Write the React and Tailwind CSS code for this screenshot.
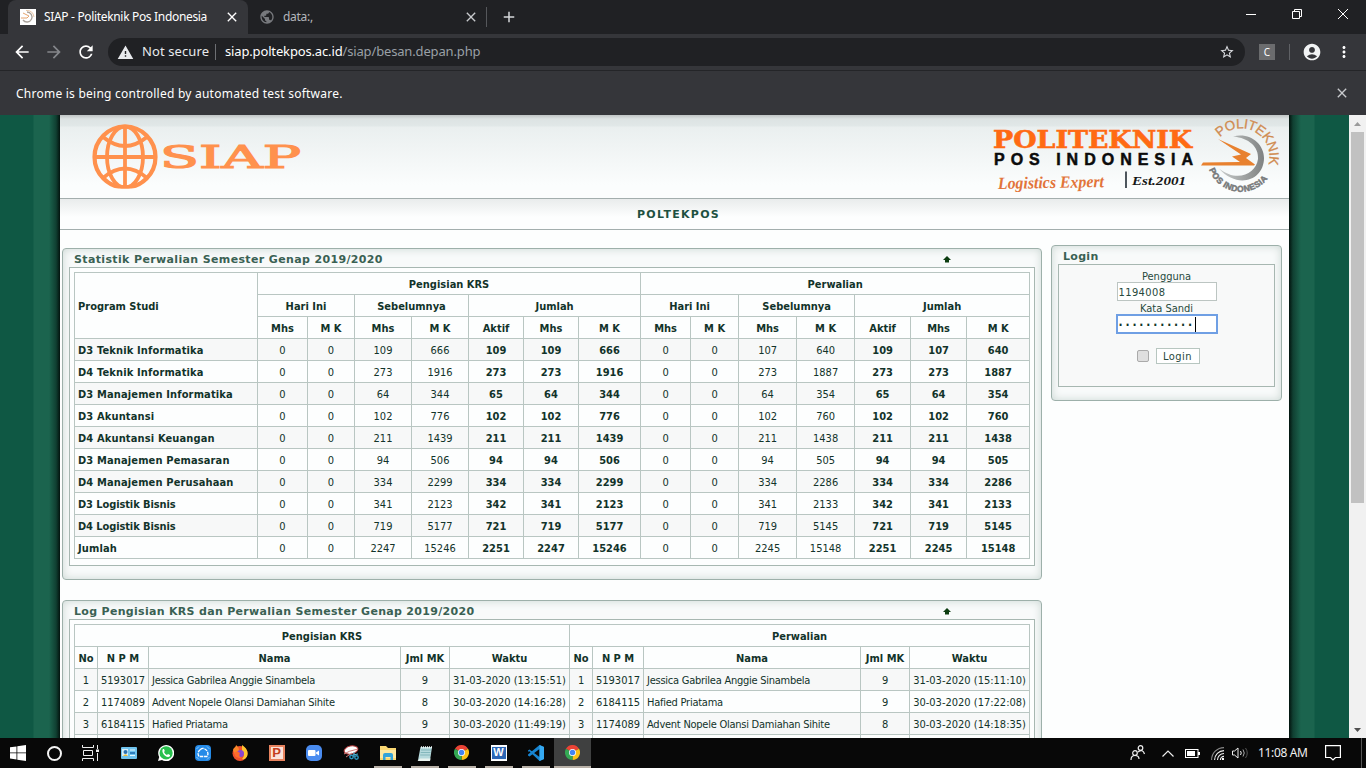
import React from "react";
import { MdAccountCircle, MdPublic, MdStarBorder, MdWarning, MdArrowBack, MdArrowForward, MdRefresh, MdClose, MdAdd, MdMoreVert } from "react-icons/md";

const ui = "font-['Noto_Sans','Open_Sans',sans-serif]";
const tahoma = "font-['DejaVu_Sans_Condensed','DejaVu_Sans',sans-serif] [font-stretch:condensed]";
const verdana = "font-['DejaVu_Sans',sans-serif]";

const stats = [
  ["D3 Teknik Informatika", "0 0 109 666 109 109 666 0 0 107 640 109 107 640"],
  ["D4 Teknik Informatika", "0 0 273 1916 273 273 1916 0 0 273 1887 273 273 1887"],
  ["D3 Manajemen Informatika", "0 0 64 344 65 64 344 0 0 64 354 65 64 354"],
  ["D3 Akuntansi", "0 0 102 776 102 102 776 0 0 102 760 102 102 760"],
  ["D4 Akuntansi Keuangan", "0 0 211 1439 211 211 1439 0 0 211 1438 211 211 1438"],
  ["D3 Manajemen Pemasaran", "0 0 94 506 94 94 506 0 0 94 505 94 94 505"],
  ["D4 Manajemen Perusahaan", "0 0 334 2299 334 334 2299 0 0 334 2286 334 334 2286"],
  ["D3 Logistik Bisnis", "0 0 341 2123 342 341 2123 0 0 341 2133 342 341 2133"],
  ["D4 Logistik Bisnis", "0 0 719 5177 721 719 5177 0 0 719 5145 721 719 5145"],
  ["Jumlah", "0 0 2247 15246 2251 2247 15246 0 0 2245 15148 2251 2245 15148"],
];
const statCols = [183, 50, 47, 57, 57, 55, 55, 62, 50, 48, 58, 58, 56, 56, 63];

const logs = [
  ["1", "5193017", "Jessica Gabrilea Anggie Sinambela", "9", "31-03-2020 (13:15:51)", "1", "5193017", "Jessica Gabrilea Anggie Sinambela", "9", "31-03-2020 (15:11:10)"],
  ["2", "1174089", "Advent Nopele Olansi Damiahan Sihite", "8", "30-03-2020 (14:16:28)", "2", "6184115", "Hafied Priatama", "9", "30-03-2020 (17:22:08)"],
  ["3", "6184115", "Hafied Priatama", "9", "30-03-2020 (11:49:19)", "3", "1174089", "Advent Nopele Olansi Damiahan Sihite", "8", "30-03-2020 (14:18:35)"],
  ["", "", "", "", "", "", "", "", "", ""],
];
const logCols = [23, 51, 252, 49, 120, 23, 51, 217, 49, 120];

const cell = "h-[22px] border-r border-b border-[#b9c6c2] px-0 pt-[2px] pb-0 leading-[19px] whitespace-nowrap overflow-hidden";

function Th({ children, className = "text-center", ...rest }) {
  return <th className={`${cell} bg-[#fdfefe] font-bold ${className}`} {...rest}>{children}</th>;
}

function Cols({ widths }) {
  return <colgroup>{widths.map((w, i) => <col key={i} style={{ width: w }} />)}</colgroup>;
}

const tableClass = `table-fixed border-separate border-spacing-0 w-[956px] border-l border-t border-[#b9c6c2] text-[11px] text-[#12332a] ${tahoma}`;

function StatsTable() {
  return (
    <table className={tableClass}>
      <Cols widths={statCols} />
      <tbody>
        <tr>
          <Th rowSpan={3} className="pl-[3px] text-left">Program Studi</Th>
          <Th colSpan={7}>Pengisian KRS</Th>
          <Th colSpan={7}>Perwalian</Th>
        </tr>
        <tr>
          {[0, 1].map((k) => (
            <React.Fragment key={k}>
              <Th colSpan={2}>Hari Ini</Th>
              <Th colSpan={2}>Sebelumnya</Th>
              <Th colSpan={3}>Jumlah</Th>
            </React.Fragment>
          ))}
        </tr>
        <tr>
          {["Mhs", "M K", "Mhs", "M K", "Aktif", "Mhs", "M K", "Mhs", "M K", "Mhs", "M K", "Aktif", "Mhs", "M K"].map((t, i) => <Th key={i}>{t}</Th>)}
        </tr>
        {stats.map(([name, vals], r) => (
          <tr key={name} className={r % 2 ? "bg-[#fdfefe]" : "bg-[#f7f8f8]"}>
            <td className={`${cell} pl-[3px] text-left font-bold ${name.includes("Logistik") ? "tracking-[-0.1px]" : "tracking-[0.14px]"}`}>{name}</td>
            {vals.split(" ").map((v, i) => (
              <td key={i} className={`${cell} text-center ${i % 7 > 3 ? "font-bold" : ""}`}>{v}</td>
            ))}
          </tr>
        ))}
      </tbody>
    </table>
  );
}

function LogTable() {
  return (
    <table className={tableClass}>
      <Cols widths={logCols} />
      <tbody>
        <tr>
          <Th colSpan={5}>Pengisian KRS</Th>
          <Th colSpan={5}>Perwalian</Th>
        </tr>
        <tr>
          {["No", "N P M", "Nama", "Jml MK", "Waktu", "No", "N P M", "Nama", "Jml MK", "Waktu"].map((t, i) => <Th key={i}>{t}</Th>)}
        </tr>
        {logs.map((row, r) => (
          <tr key={r} className={r % 2 ? "bg-[#fdfefe]" : "bg-[#f7f8f8]"}>
            {row.map((v, i) => (
              <td key={i} className={`${cell} ${i % 5 === 2 ? "pl-[3px] text-left tracking-[-0.25px]" : "text-center"}`}>{v}</td>
            ))}
          </tr>
        ))}
      </tbody>
    </table>
  );
}

function Panel({ title, className, titleClass, arrow, children }) {
  return (
    <section className={`rounded-[4px] border border-[#9db0aa] bg-[#f8fafa] px-[6px] shadow-[inset_0_0_8px_#cbd7d3] ${className}`}>
      <div className="flex h-[18px] items-center justify-between">
        <h2 className={`text-[11px] leading-[18px] font-bold whitespace-nowrap text-[#3a6153] ${verdana} ${titleClass}`}>{title}</h2>
        {arrow && (
          <svg className="mt-[3px] mr-[84px] h-[7px] w-[8px]" viewBox="0 0 8 7"><path d="M4 0 8 4H6V6.500H2V4H0Z" fill="#0c3d10" /></svg>
        )}
      </div>
      {children}
    </section>
  );
}

function Globe() {
  return (
    <svg className="h-[66px] w-[66px]" viewBox="0 0 66 66" fill="none" stroke="#ff914d" strokeWidth="3.8">
      <clipPath id="globeClip"><rect width="66" height="64.5" /></clipPath>
      <g clipPath="url(#globeClip)">
        <circle cx="33" cy="33" r="30.5" strokeWidth="4.2" />
        <ellipse cx="33" cy="33" rx="18" ry="30.5" />
        <path d="M33 2V64M2 33H64" />
        <path d="M11 13Q33 31 55 13M11 54Q33 35 55 54" />
      </g>
    </svg>
  );
}

function CampusLogo() {
  return (
    <svg className="h-[80px] w-[292px]" viewBox="990 117 292 80">
      <defs>
        <path id="arcTop" d="M1220 137.500A28.500 28.500 0 0 1 1266.500 169.500" />
        <path id="arcBottom" d="M1209 169.500A34 34 0 0 0 1269 177" />
        <linearGradient id="ring" x1="0" x2="1" y1="0" y2="0"><stop offset="0" stopColor="#c9cccb" /><stop offset="1" stopColor="#7f8282" /></linearGradient>
      </defs>
      <text x="993" y="147.500" textLength="199" lengthAdjust="spacingAndGlyphs" fontFamily="DejaVu Serif" fontWeight="700" fontSize="24" fill="#ff6a13" stroke="#ff6a13" strokeWidth=".6">POLITEKNIK</text>
      <text x="994" y="164.500" textLength="199" fontFamily="Liberation Sans" fontWeight="700" fontSize="16" fill="#0b0b0b" stroke="#0b0b0b" strokeWidth=".5">POS INDONESIA</text>
      <text x="998" y="188" textLength="106" lengthAdjust="spacingAndGlyphs" transform="rotate(-1 1050 188)" fontFamily="Liberation Serif" fontStyle="italic" fontWeight="700" fontSize="17" fill="#e2743a">Logistics Expert</text>
      <path d="M1126 171.500V188" stroke="#222c35" strokeWidth="1.600" />
      <text x="1132" y="184.500" textLength="54" lengthAdjust="spacingAndGlyphs" fontFamily="Liberation Serif" fontStyle="italic" fontWeight="700" fontSize="13.500" fill="#161616">Est.2001</text>
      <path d="M1233 136.500C1250 132 1264 144 1264 158C1264 180 1238 190 1219 168.500C1237 183 1256 174 1258 159C1259 147 1249 138 1233 136.500Z" fill="url(#ring)" />
      <path d="M1218 139 1251 154 1246 158 1255 164.500 1254 165.500H1201L1203 162.500 1240 162 1232 156.500 1241 154.500Z" fill="#e8812f" />
      <text fontFamily="Liberation Sans" fontSize="13.500" fill="#d08b50" stroke="#d08b50" strokeWidth=".3"><textPath href="#arcTop" textLength="76">POLITEKNIK</textPath></text>
      <text fontFamily="Liberation Sans" fontWeight="700" fontSize="8.500" fill="#77797a" stroke="#77797a" strokeWidth=".5"><textPath href="#arcBottom" textLength="72">POS INDONESIA</textPath></text>
    </svg>
  );
}

function ChromeIcon() {
  return (
    <svg className="h-[15px] w-[15px]" viewBox="0 0 24 24">
      <path d="M12 12 1.600 6A12 12 0 0 1 22.400 6Z" fill="#ea4335" />
      <path d="M12 12 22.400 6A12 12 0 0 1 12 24Z" fill="#fbc116" />
      <path d="M12 12V24A12 12 0 0 1 1.600 6Z" fill="#34a853" />
      <circle cx="12" cy="12" r="5.600" fill="#fff" /><circle cx="12" cy="12" r="4.400" fill="#4285f4" />
    </svg>
  );
}

function Task({ children, open, active }) {
  return (
    <div className={`flex h-[30px] w-[37px] flex-col items-center ${active ? "bg-[#3f4040]" : ""}`}>
      <div className="flex h-7 items-center pt-[1px]">{children}</div>
      {open && <div className={`h-[2px] bg-[#b9b1a8] ${active ? "w-full" : "w-7"}`} />}
    </div>
  );
}

function Taskbar() {
  return (
    <footer className="flex h-[30px] shrink-0 bg-[#080808]">
      <div className="flex h-[30px] w-9 items-center justify-center"><svg className="h-4 w-4" viewBox="0 0 16 16" fill="#fff"><path d="M0 2.300 6.500 1.400V7.500H0ZM7.300 1.300 16 0V7.500H7.300ZM0 8.300H6.500V14.500L0 13.600ZM7.300 8.300H16V16L7.300 14.700Z" /></svg></div>
      <div className="flex h-[30px] w-9 items-center justify-center"><div className="h-[15px] w-[15px] rounded-full border-2 border-[#f4f4f4]" /></div>
      <div className="mr-[2px] flex h-[30px] w-9 items-center justify-center"><svg className="h-4 w-[17px]" viewBox="0 0 17 16" fill="none" stroke="#eee"><path d="M.5 0V2.500H11.500V0M.5 16V13.500H11.500V16M1.500 5.500H10.500V10.500H1.500ZM15.500 0V4M15.500 8V16" /><path d="M14 4.500H17V7H14Z" fill="#eee" stroke="none" /></svg></div>
      <Task><svg className="h-3 w-4" viewBox="0 0 16 12"><rect width="16" height="12" rx="1" fill="#6fc3ee" /><rect x="1" y="2" width="6" height="7" fill="#d7effb" /><circle cx="4.500" cy="5" r="2" fill="#2b72b4" /><path d="M2 9Q4.500 5.500 7 9Z" fill="#e8bc3b" /><path d="M9 3H14M9 8.500H14" stroke="#e8f7ff" /><path d="M9 6H14" stroke="#1b67ae" strokeWidth="1.500" /></svg></Task>
      <Task><svg className="h-4 w-4" viewBox="0 0 16 16"><path d="M0 16 1.200 12A8 8 0 1 1 4 14.900Z" fill="#fff" /><circle cx="8.100" cy="7.900" r="6.600" fill="#28c04d" /><path d="M5 4C3.500 6 5 9 7 10.700C9 12.300 11 12.500 12 11V10L10 9 9 10C7.500 9.500 6.500 8 6 7L6.800 6 6 4Z" fill="#fff" /></svg></Task>
      <Task><svg className="h-4 w-4" viewBox="0 0 16 16"><rect width="16" height="16" rx="4" fill="#258be8" /><path d="M5.500 4.500A4.800 4.800 0 0 0 4 11.500H12A4.800 4.800 0 0 0 10.500 4.500A3.500 3.500 0 0 0 5.500 4.500Z" fill="none" stroke="#fff" strokeWidth="1.300" strokeDasharray="3.500 .8" /><path d="M1.500 4 4 1.500M12 1.500 14.500 4M1.500 12 4 14.500M14.500 12 12 14.500" stroke="#9cd2ff" strokeWidth=".8" /></svg></Task>
      <Task><svg className="h-4 w-4" viewBox="0 0 16 16"><circle cx="8" cy="8.500" r="7.500" fill="#f1512c" /><path d="M1 5C2 2 4 2 4 0C6 2 7 3 7 5L10 7 4 12Z" fill="#fc8729" /><path d="M10 0C15 3 16 7 15.500 10C15 13 12 15 10 14Q14 9 10 6Z" fill="#ffc42e" /><circle cx="8.500" cy="8.500" r="3.500" fill="#8b45d1" /><path d="M2 8Q5 5 8 8Q6 12 10 13Q4 14 2 8Z" fill="#ff6b2c" /></svg></Task>
      <Task><div className="flex h-4 w-4 items-center justify-center border-2 border-[#e8835f] bg-[#fbe3d9] font-['Liberation_Sans',sans-serif] text-[13px] leading-none font-bold text-[#c43e1c]">P</div></Task>
      <Task><div className="flex h-4 w-4 items-center justify-center rounded-[5px] bg-[#4a8cf0]"><svg className="h-2 w-3" viewBox="0 0 12 8" fill="#fff"><rect y="1" width="7.500" height="6" rx="1" /><path d="M8 3.500 11 1.500V6.500L8 4.500Z" /></svg></div></Task>
      <Task><svg className="h-4 w-4" viewBox="0 0 16 16"><ellipse cx="8" cy="5" rx="7" ry="4" fill="#fff" stroke="#b23838" transform="rotate(-12 8 5)" /><path d="M1 9Q5 6 15 4M3 12 9 8" stroke="#d07c7c" fill="none" /><circle cx="8.500" cy="12" r="1.700" fill="none" stroke="#2b95bf" strokeWidth="1.400" /><circle cx="13.500" cy="12.500" r="1.700" fill="none" stroke="#2b95bf" strokeWidth="1.400" /><path d="M10 10 15 9M11 7V12" stroke="#4fb5d6" /></svg></Task>
      <Task open><svg className="h-[14px] w-4" viewBox="0 0 16 14"><path d="M0 0H6L8 2H16V14H0Z" fill="#fbd873" /><path d="M0 4H16V12H0Z" fill="#ffe8a0" /><path d="M3 14V9Q3 7 5 7H11Q13 7 13 9V14H10.500V11H5.500V14Z" fill="#35a3d9" /></svg></Task>
      <Task open><svg className="h-4 w-4" viewBox="0 0 16 16"><path d="M3.500 2H15L13 15.500H1Z" fill="#b5d9dc" /><path d="M3 13.500H13.500L13 16H.5Z" fill="#e9f3ef" /><path d="M4 5H14M3.700 7.500H13.500M3.200 10H13" stroke="#6da7ae" strokeWidth=".7" /><path d="M4 2.200H15" stroke="#f1f5f4" strokeWidth="2" strokeDasharray="1 1" /></svg></Task>
      <Task open><ChromeIcon /></Task>
      <Task open><div className="flex h-4 w-4 items-center justify-center border border-white bg-[#f3f8ff] font-['Liberation_Sans',sans-serif]"><div className="flex h-3 w-3.5 items-center justify-center bg-[#2b66b5] text-[11px] leading-none font-bold text-white">W</div></div></Task>
      <Task open><svg className="h-4 w-4" viewBox="0 0 16 16"><path d="M11.500 0 16 2V14L11.500 16 1 6 0 7 0 5.500 1.500 4.500 11.500 12V4L1.500 11.500 0 10.500V9.500Z" fill="#1784d1" /><path d="M11.500 0 16 2V14L11.500 16Z" fill="#35a9f2" /></svg></Task>
      <Task open active><ChromeIcon /></Task>

      <div className="ml-auto flex h-[30px] w-[236px] items-center">
        <svg className="h-4 w-4" viewBox="0 0 16 16" fill="none" stroke="#eee" strokeWidth="1.200"><circle cx="10.500" cy="3" r="2.300" /><circle cx="5" cy="8" r="2.300" /><path d="M1 15Q1 10.500 5 10.500T9 14M8 7Q13 3.500 14.500 9" /></svg>
        <svg className="ml-[16px] h-[7px] w-[12px]" viewBox="0 0 12 7" fill="none" stroke="#eee" strokeWidth="1.200"><path d="M.5 6.500 6 1 11.500 6.500" /></svg>
        <svg className="ml-[11px] h-[9px] w-[15px]" viewBox="0 0 15 9"><rect x=".5" y=".5" width="12.500" height="8" fill="none" stroke="#fff" /><rect x="2" y="2" width="8" height="5" fill="#fff" /><rect x="13" y="3" width="2" height="3" fill="#fff" /></svg>
        <svg className="ml-[11px] h-[13px] w-[13px]" viewBox="0 0 13 13" fill="none" stroke="#eee" strokeWidth="1.100"><path d="M.6 13A12.400 12.400 0 0 1 13 .6" stroke="#888" /><path d="M3.600 13A9.400 9.400 0 0 1 13 3.600M6.500 13A6.500 6.500 0 0 1 13 6.500M9.400 13A3.600 3.600 0 0 1 13 9.400" /><circle cx="12" cy="12" r="1.200" fill="#fff" stroke="none" /></svg>
        <svg className="ml-[8px] h-3 w-[17px]" viewBox="0 0 17 12" fill="none" stroke="#eee"><path d="M.5 4V8H2.500L6 11V1L2.500 4Z" /><path d="M8.500 4Q10 6 8.500 8" /><path d="M11 2.500Q13.500 6 11 9.500" stroke="#aaa" /><path d="M13.500 1Q17 6 13.500 11" stroke="#555" /></svg>
        <span className={`ml-[9px] w-[60px] text-[12px] leading-[16px] whitespace-nowrap tracking-[-0.35px] text-[#f0f0f0] ${ui}`}>11:08 AM</span>
        <svg className="ml-[7px] h-4 w-4" viewBox="0 0 16 16" fill="none" stroke="#fff" strokeWidth="1.200"><path d="M.6.6H15.400V12.500H10.500L8 15 5.500 12.500H.6Z" /></svg>
        <div className="ml-[20px] h-[30px] w-px bg-[#555]" />
      </div>
    </footer>
  );
}

function BrowserChrome() {
  return (
    <header className={`shrink-0 text-[12px] text-white ${ui}`}>
      <div className="flex h-[34px] bg-[#202124] pl-2">
        <div className="flex h-[34px] w-[240px] items-center rounded-t-[8px] bg-[#35363a] pr-[8px] pl-3">
          <svg className="h-4 w-4 bg-white" viewBox="0 0 16 16" fill="none"><path d="M7 3A5 5 0 1 1 3 11" stroke="#a9a29b" strokeWidth="1.300" /><path d="M3 4 9 7 7 9H1" stroke="#e6a36c" /><path d="M6 1.500Q13 1 14 8" stroke="#e9c7a7" /></svg>
          <span className="ml-2 flex-1 tracking-[-0.33px] whitespace-nowrap">SIAP - Politeknik Pos Indonesia</span>
          <MdClose className="h-4 w-4" />
        </div>
        <div className="flex h-[34px] w-[238px] items-center pr-[7px] pl-[11px] text-[#b4b7bb]">
          <MdPublic className="h-4 w-4 text-[#77797d]" />
          <span className="ml-2 flex-1 tracking-[-0.3px]">data:,</span>
          <MdClose className="h-4 w-4 text-[#c8cacd]" />
        </div>
        <div className="mt-[7px] h-5 w-px bg-[#55575b]" />
        <MdAdd className="mt-[8px] ml-[13px] h-[18px] w-[18px] text-[#d5d7da]" />
        <div className="ml-auto flex items-start pt-[9px]">
          <svg className="h-[11px] w-[10px]" viewBox="0 0 10 11"><path d="M0 5.500H10" stroke="#fff" /></svg>
          <svg className="ml-[36px] h-[10px] w-[10px]" viewBox="0 0 10 10" fill="none" stroke="#fff"><path d="M.5 2.500H7.500V9.500H.5ZM2.500 2.500V.5H9.500V7.500H7.500" /></svg>
          <svg className="mr-[18px] ml-[36px] h-[10px] w-[10px]" viewBox="0 0 10 10" stroke="#fff"><path d="M0 0 10 10M10 0 0 10" /></svg>
        </div>
      </div>
      <div className="flex h-9 items-center bg-[#35363a]">
        <MdArrowBack className="ml-[12px] h-5 w-5" />
        <MdArrowForward className="ml-[12px] h-5 w-5 text-[#85878b]" />
        <MdRefresh className="ml-[12px] h-5 w-5" />
        <div className="ml-[12px] flex h-7 w-[1137px] items-center rounded-full bg-[#202124] pl-[9px] text-[13px]">
          <MdWarning className="h-[17px] w-[17px] text-[#e8eaed]" />
          <span className="ml-2 w-[66px] whitespace-nowrap tracking-[0.1px] text-[#e8eaed]">Not secure</span>
          <div className="ml-[7px] h-4 w-px bg-[#6d6f73]" />
          <span className="ml-[9px] flex-1 tracking-[-0.15px] whitespace-nowrap">siap.poltekpos.ac.id<span className="text-[#9aa0a6]">/siap/besan.depan.php</span></span>
          <MdStarBorder className="mr-[10px] h-4 w-4 text-[#dadce0]" />
        </div>
        <div className="ml-[14px] flex h-4 w-4 items-center justify-center bg-[#6b6c6e] text-[10px] leading-none">C</div>
        <div className="ml-[14px] h-4 w-px bg-[#5f6165]" />
        <MdAccountCircle className="ml-[12px] h-5 w-5 text-[#f1f3f4]" />
        <MdMoreVert className="ml-[13px] h-[18px] w-[18px]" />
      </div>
      <div className="flex h-[45px] items-center justify-between border-t border-[#242528] bg-[#35363a] pr-4 pl-4">
        <span className="pt-[2px] tracking-[0.24px] whitespace-nowrap">Chrome is being controlled by automated test software.</span>
        <MdClose className="h-4 w-4 text-[#c8cacd]" />
      </div>
    </header>
  );
}

export default function App() {
  return (
    <div className="flex h-[768px] w-[1366px] flex-col overflow-hidden bg-white">
      <BrowserChrome />
      <div className="flex h-[623px] shrink-0 overflow-hidden">
        <div className="h-full w-[60px] bg-[linear-gradient(90deg,#0f5844_0px,#0f5844_33px,#1b644e_34px,#1b644e_49px,#104032_56px,#03130e_60px)]" />
        <main className="h-full w-[1229px] bg-[#fdfefe]">
          <div className="flex h-[83px] items-start justify-between bg-[linear-gradient(180deg,#bfc4c4_0px,#dde3e3_4px,#e1e8e8_11px,#eaefef_12px,#fbfdfd_70px)]">
            <div className="flex pt-[9px] pl-[32px]">
              <Globe />
              <svg className="h-[66px] w-[146px]" viewBox="0 0 146 66"><text x="2" y="44" textLength="141" lengthAdjust="spacingAndGlyphs" fontFamily="DejaVu Serif" fontSize="31" fill="#ff914d" stroke="#ff914d" strokeWidth="1.200">SIAP</text></svg>
            </div>
            <div className="pt-[2px] pr-[7px]"><CampusLogo /></div>
          </div>
          <nav className={`flex h-8 items-center justify-center border-y border-[#a3aead] bg-[linear-gradient(180deg,#e9ecec,#fdfefe_18px)] pt-[2px] pl-[8px] text-[11px] font-bold tracking-[1.3px] text-[#1e5141] ${verdana}`}>POLTEKPOS</nav>
          <div className="flex items-start pl-[2px]">
            <div>
              <Panel arrow title="Statistik Perwalian Semester Genap 2019/2020" className="mt-[18px] h-[332px] w-[980px]" titleClass="pl-[5px] pt-[3px] tracking-[0.36px]">
                <div className="h-[299px] w-[966px] border border-[#a7b7b1] bg-[#fdfefe] p-[4px]"><StatsTable /></div>
              </Panel>
              <Panel arrow title="Log Pengisian KRS dan Perwalian Semester Genap 2019/2020" className="mt-[20px] h-[332px] w-[980px]" titleClass="pl-[5px] pt-[3px] tracking-[0.31px]">
                <div className="h-[299px] w-[966px] border border-[#a7b7b1] bg-[#fdfefe] p-[4px]"><LogTable /></div>
              </Panel>
            </div>
            <Panel title="Login" className="mt-[15px] ml-[9px] h-[156px] w-[231px]" titleClass="pl-[5px] pt-[3px] tracking-[0.3px]">
              <div className={`flex h-[123px] w-[217px] flex-col items-center border border-[#a7b7b1] bg-[#f8f9f9] pt-[5px] text-[11px] text-[#27493d] ${tahoma}`}>
                <div className="h-[12px] leading-[14px]">Pengguna</div>
                <div className={`h-[19px] w-[100px] border border-[#bcc5c2] bg-white pl-[1px] leading-[19px] tracking-[0.4px] ${verdana}`}>1194008</div>
                <div className="mt-[1px] h-[12px] leading-[14px]">Kata Sandi</div>
                <div className={`flex h-[20px] w-[102px] items-center border-2 border-[#6f9fe4] bg-white pl-[1px] text-[12px] font-bold tracking-[2.850px] text-[#123529] ${verdana}`}><span className="pt-[1px]">···········</span><span className="h-[15px] w-px bg-black" /></div>
                <div className="mt-[14px] flex items-center pl-[3px]">
                  <div className="mr-[7px] h-3 w-3 rounded-[2px] border border-[#aaa] bg-[#dfdfdf]" />
                  <div className={`h-[16px] w-[44px] border border-[#b7c6c0] bg-white text-center leading-[16px] tracking-[0.5px] ${verdana}`}>Login</div>
                </div>
              </div>
            </Panel>
          </div>
        </main>
        <div className="h-full w-[60px] bg-[linear-gradient(90deg,#03130e_0px,#104032_4px,#1b644e_12px,#1b644e_25px,#0f5844_26px,#0f5844_60px)]" />
        <div className="flex h-full w-[17px] flex-col items-center bg-[#f1f1f1]">
          <div className="flex h-[17px] items-center"><svg className="h-[4px] w-[7px]" viewBox="0 0 7 4"><path d="M3.500 0 7 4H0Z" fill="#9b9b9b" /></svg></div>
          <div className="h-[371px] w-[13px] bg-[#c1c1c1]" />
          <div className="mt-auto flex h-[17px] items-center"><svg className="h-[4px] w-[7px]" viewBox="0 0 7 4"><path d="M0 0H7L3.500 4Z" fill="#505050" /></svg></div>
        </div>
      </div>
      <Taskbar />
    </div>
  );
}
